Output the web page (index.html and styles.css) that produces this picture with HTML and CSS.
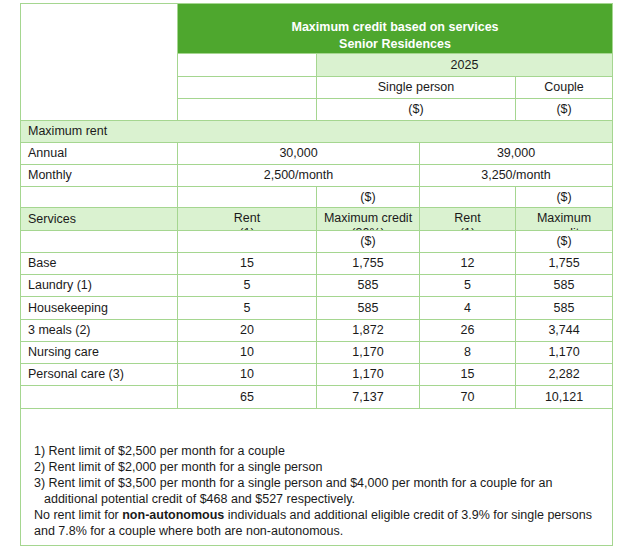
FILE: index.html
```html
<!DOCTYPE html>
<html>
<head>
<meta charset="utf-8">
<link rel="stylesheet" href="styles.css">
</head>
<body>
<table class="credit">
  <colgroup>
    <col class="c1"><col class="c2"><col class="c3"><col class="c4"><col class="c5">
  </colgroup>
  <tr class="r-head">
    <td rowspan="4" class="blank"></td>
    <td colspan="4" class="title">Maximum credit based on services<br>Senior Residences</td>
  </tr>
  <tr class="r-tall">
    <td class="blank"></td>
    <td colspan="3" class="light ctr">2025</td>
  </tr>
  <tr>
    <td class="blank"></td>
    <td colspan="2" class="ctr">Single person</td>
    <td class="ctr">Couple</td>
  </tr>
  <tr>
    <td class="blank"></td>
    <td colspan="2" class="ctr">($)</td>
    <td class="ctr">($)</td>
  </tr>
  <tr>
    <td colspan="5" class="light lbl">Maximum rent</td>
  </tr>
  <tr>
    <td class="lbl">Annual</td>
    <td colspan="2" class="ctr">30,000</td>
    <td colspan="2" class="ctr">39,000</td>
  </tr>
  <tr>
    <td class="lbl">Monthly</td>
    <td colspan="2" class="ctr">2,500/month</td>
    <td colspan="2" class="ctr">3,250/month</td>
  </tr>
  <tr class="r-short">
    <td></td>
    <td></td>
    <td class="ctr">($)</td>
    <td></td>
    <td class="ctr">($)</td>
  </tr>
  <tr class="light r-tall">
    <td class="lbl">Services</td>
    <td class="ctr"><div class="clip">Rent<br>(1)</div></td>
    <td class="ctr"><div class="clip">Maximum credit<br>(30%)</div></td>
    <td class="ctr"><div class="clip">Rent<br>(1)</div></td>
    <td class="ctr"><div class="clip">Maximum<br>credit</div></td>
  </tr>
  <tr>
    <td></td>
    <td></td>
    <td class="ctr">($)</td>
    <td></td>
    <td class="ctr">($)</td>
  </tr>
  <tr><td class="lbl">Base</td><td class="ctr">15</td><td class="ctr">1,755</td><td class="ctr">12</td><td class="ctr">1,755</td></tr>
  <tr><td class="lbl">Laundry (1)</td><td class="ctr">5</td><td class="ctr">585</td><td class="ctr">5</td><td class="ctr">585</td></tr>
  <tr class="r-tall"><td class="lbl">Housekeeping</td><td class="ctr">5</td><td class="ctr">585</td><td class="ctr">4</td><td class="ctr">585</td></tr>
  <tr><td class="lbl">3 meals (2)</td><td class="ctr">20</td><td class="ctr">1,872</td><td class="ctr">26</td><td class="ctr">3,744</td></tr>
  <tr><td class="lbl">Nursing care</td><td class="ctr">10</td><td class="ctr">1,170</td><td class="ctr">8</td><td class="ctr">1,170</td></tr>
  <tr><td class="lbl">Personal care (3)</td><td class="ctr">10</td><td class="ctr">1,170</td><td class="ctr">15</td><td class="ctr">2,282</td></tr>
  <tr class="r-tall"><td></td><td class="ctr">65</td><td class="ctr">7,137</td><td class="ctr">70</td><td class="ctr">10,121</td></tr>
  <tr>
    <td colspan="5" class="notes">
      <div class="note">1)&nbsp;Rent limit of $2,500 per month for a couple</div>
      <div class="note">2)&nbsp;Rent limit of $2,000 per month for a single person</div>
      <div class="note">3)&nbsp;Rent limit of $3,500 per month for a single person and $4,000 per month for a couple for an<br>additional potential credit of $468 and $527 respectively.</div>
      <div class="free">No rent limit for <b>non-autonomous</b> individuals and additional eligible credit of 3.9% for single persons<br>and 7.8% for a couple where both are non-autonomous.</div>
    </td>
  </tr>
</table>
</body>
</html>
```

FILE: styles.css
```css
html, body {
  margin: 0;
  padding: 0;
  background: #ffffff;
}
body {
  padding: 3px 0 0 20px;
  font-family: "Liberation Sans", Arial, sans-serif;
  font-size: 12.5px;
  color: #1a1a1a;
}
.credit {
  border-collapse: collapse;
  table-layout: fixed;
  width: 592px;
}
.c1 { width: 157px; }
.c2 { width: 139px; }
.c3 { width: 103px; }
.c4 { width: 96px; }
.c5 { width: 97px; }
.credit td {
  border: 1px solid #a5d690;
  padding: 0;
  height: 21px;
  line-height: 15px;
  vertical-align: middle;
  white-space: nowrap;
}
.credit tr.r-tall td { height: 22px; }
.credit tr.r-short td { height: 20px; }
.credit td.blank {
  background: #ffffff;
}
.credit tr.r-head td { height: 49px; }
.credit td.title {
  background: #4ea72e;
  color: #ffffff;
  font-weight: bold;
  text-align: center;
  line-height: 17px;
  vertical-align: bottom;
}
.light, .light td { background: #daf2d0; }
.ctr { text-align: center; }
.credit td.lbl { padding-left: 7px; }
.credit td .clip {
  height: 22px;
  overflow: hidden;
  line-height: 15px;
  padding-top: 3px;
  box-sizing: border-box;
}
.credit td.notes {
  padding: 34px 0 6px 13px;
  line-height: 16px;
  vertical-align: top;
}
.note {
  padding-left: 10px;
  text-indent: -10px;
}
.free {
  padding-left: 0;
}
```
